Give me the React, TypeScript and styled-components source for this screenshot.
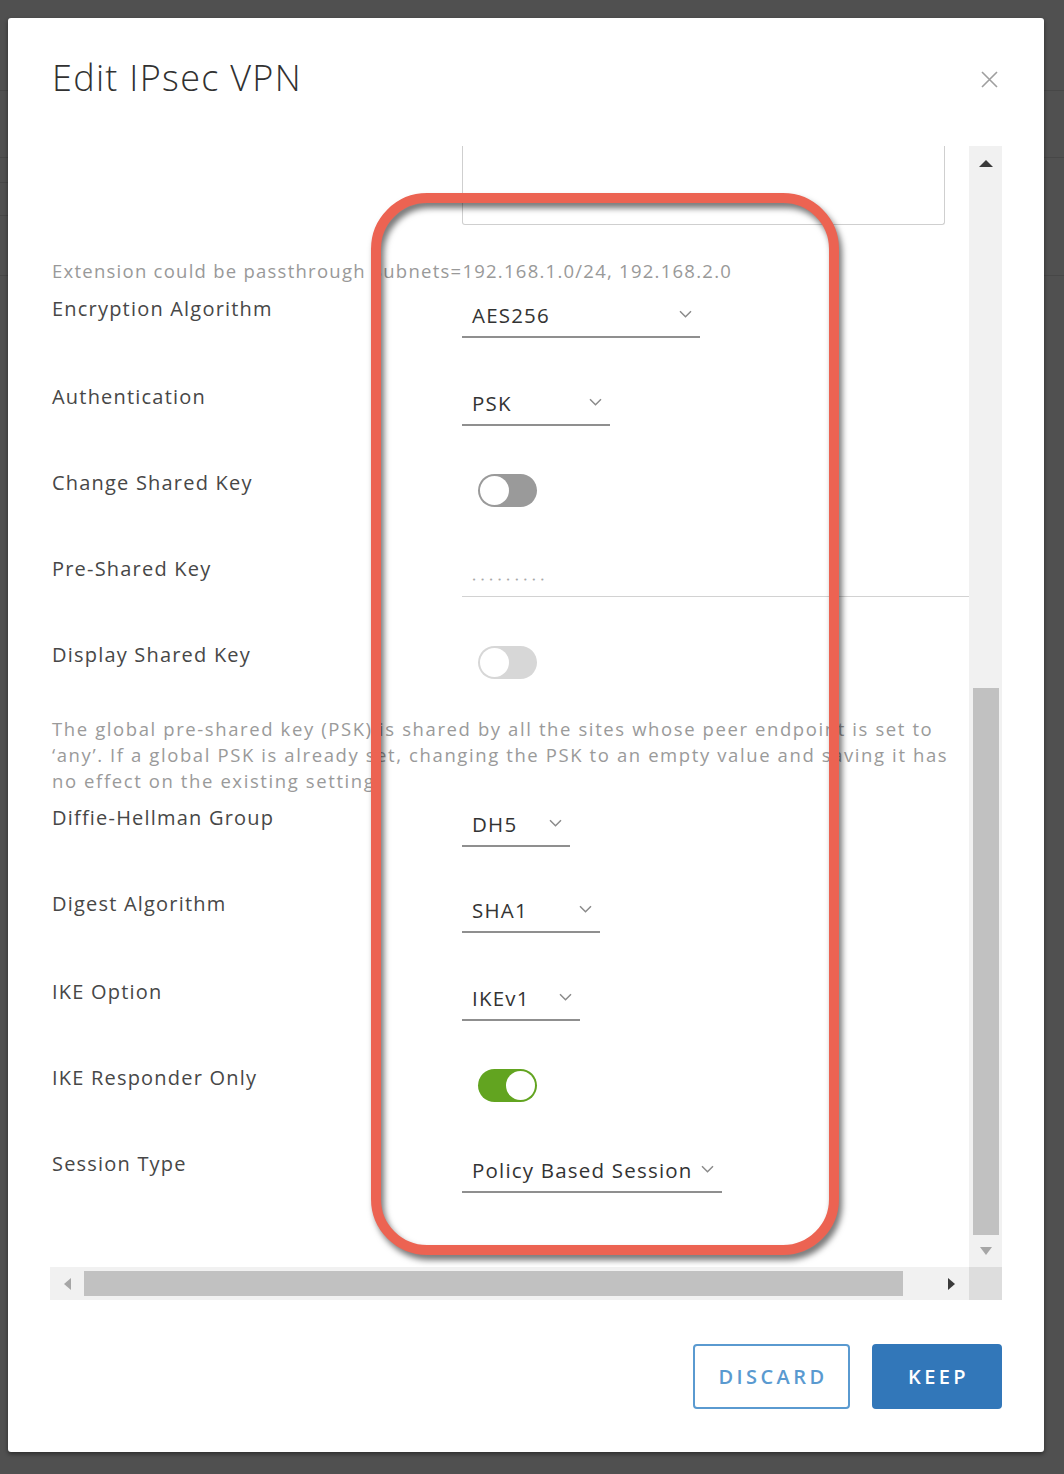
import React from "react";
import styled, { createGlobalStyle, css } from "styled-components";

const GlobalStyle = createGlobalStyle`
  html, body {
    margin: 0;
    padding: 0;
    background: #505050;
  }
  body {
    font-family: "Open Sans", "Liberation Sans", sans-serif;
    -webkit-font-smoothing: antialiased;
  }
`;

const Page = styled.div`
  position: relative;
  width: 1064px;
  height: 1474px;
  box-sizing: border-box;
  padding: 18px 20px 0 8px;
  overflow: hidden;
  background:
    linear-gradient(#474747, #474747) 0 90px / 100% 1px no-repeat,
    linear-gradient(#474747, #474747) 0 157px / 100% 1px no-repeat,
    linear-gradient(#474747, #474747) 0 275px / 100% 1px no-repeat,
    linear-gradient(#474747, #474747) 0 182px / 10px 1px no-repeat,
    linear-gradient(#474747, #474747) 0 215px / 10px 1px no-repeat,
    #505050;
`;

const Modal = styled.div`
  width: 1036px;
  height: 1434px;
  box-sizing: border-box;
  background: #ffffff;
  border-radius: 3px;
  box-shadow: 0 2px 4px rgba(0, 0, 0, 0.45);
  display: flex;
  flex-direction: column;
  padding: 38px 42px 0 42px;
`;

const Header = styled.div`
  display: flex;
  align-items: center;
  justify-content: space-between;
  height: 44px;
  padding-left: 2px;
`;

const Title = styled.h2`
  margin: 0;
  font-family: "Open Sans", "Liberation Sans", sans-serif;
  font-weight: 300;
  font-size: 36px;
  line-height: 44px;
  color: #313131;
  letter-spacing: 1.3px;
`;

const CloseButton = styled.button`
  border: 0;
  background: transparent;
  padding: 0;
  width: 17px;
  height: 17px;
  margin-right: 4px;
  margin-top: 2px;
  display: flex;
  align-items: center;
  justify-content: center;
  cursor: pointer;
`;

const ScrollFrame = styled.div`
  margin-top: 46px;
  width: 952px;
  height: 1154px;
  display: grid;
  grid-template-columns: 919px 33px;
  grid-template-rows: 1121px 33px;
`;

const Viewport = styled.div`
  overflow: hidden;
  position: relative;
  background: #ffffff;
`;

const Content = styled.div`
  display: flex;
  flex-direction: column;
  width: 1000px;
`;

const TextareaStub = styled.div`
  margin-left: 412px;
  width: 483px;
  height: 79px;
  box-sizing: border-box;
  border: 1px solid #cfcfcf;
  border-top: 0;
  border-radius: 0 0 3px 3px;
`;

const HelperLine = styled.div`
  margin-top: 34px;
  padding-left: 2px;
  font-size: 18.5px;
  line-height: 24px;
  color: #999999;
  white-space: nowrap;
  letter-spacing: 1.25px;
`;

const Row = styled.div<{ $h: number; $mt?: number }>`
  display: grid;
  grid-template-columns: 412px 1fr;
  height: ${(p) => p.$h}px;
  margin-top: ${(p) => p.$mt ?? 0}px;
  align-items: start;
`;

const Label = styled.div`
  padding-left: 2px;
  font-size: 20px;
  line-height: 24px;
  color: #474747;
  letter-spacing: 1.2px;
  white-space: nowrap;
`;

const Select = styled.div<{ $w: number }>`
  width: ${(p) => p.$w}px;
  box-sizing: border-box;
  display: flex;
  align-items: center;
  justify-content: space-between;
  padding: 6px 8px 9px 10px;
  border-bottom: 2px solid #8f8f8f;
  cursor: pointer;
`;

const SelectValue = styled.span`
  font-size: 20.5px;
  line-height: 24px;
  color: #333333;
  letter-spacing: 1.2px;
  white-space: nowrap;
`;

const Chevron = styled.svg`
  width: 13px;
  height: 8px;
  flex: none;
  margin-top: -3px;
`;

const PasswordField = styled.div`
  height: 40px;
  box-sizing: border-box;
  border-bottom: 1px solid #d2d2d2;
  padding: 8px 0 0 10px;
`;

const Dots = styled.span`
  font-family: "DejaVu Sans", sans-serif;
  font-size: 7px;
  line-height: 22px;
  color: #a8a8a8;
  letter-spacing: 4.4px;
`;

type ToggleState = "off" | "disabled" | "on";

const trackColor = (s: ToggleState) =>
  s === "on" ? "#62a420" : s === "off" ? "#9a9a9a" : "#d7d7d7";

const Toggle = styled.span<{ $state: ToggleState }>`
  position: relative;
  display: block;
  width: 59px;
  height: 33px;
  margin: 3px 0 0 16px;
  border-radius: 17px;
  background: ${(p) => trackColor(p.$state)};
  &::after {
    content: "";
    position: absolute;
    top: 2px;
    width: 29px;
    height: 29px;
    border-radius: 50%;
    background: #ffffff;
    ${(p) =>
      p.$state === "on"
        ? css`
            right: 2px;
          `
        : css`
            left: 2px;
          `}
  }
`;

const HelpText = styled.p`
  margin: 0;
  padding-left: 2px;
  font-size: 18.5px;
  line-height: 26px;
  color: #9a9a9a;
  letter-spacing: 1.6px;
  white-space: nowrap;
`;

const HelpLine = styled.span`
  display: block;
`;

const VTrack = styled.div`
  background: #f1f1f1;
  display: flex;
  flex-direction: column;
  align-items: center;
`;

const ArrowCell = styled.div<{ $h?: number; $w?: number; $justify?: string; $padRight?: number }>`
  flex: none;
  display: flex;
  align-items: center;
  justify-content: ${(p) => p.$justify ?? "center"};
  height: ${(p) => (p.$h ? `${p.$h}px` : "100%")};
  width: ${(p) => (p.$w ? `${p.$w}px` : "100%")};
  padding-right: ${(p) => p.$padRight ?? 0}px;
  box-sizing: border-box;
`;

type Dir = "up" | "down" | "left" | "right";

const Arrow = styled.span<{ $dir: Dir; $dark?: boolean }>`
  width: 0;
  height: 0;
  ${(p) => {
    const c = p.$dark ? "#3a3a3a" : "#a6a6a6";
    switch (p.$dir) {
      case "up":
        return css`
          border-left: 7.5px solid transparent;
          border-right: 7.5px solid transparent;
          border-bottom: 7px solid ${c};
        `;
      case "down":
        return css`
          border-left: 6.5px solid transparent;
          border-right: 6.5px solid transparent;
          border-top: 8px solid ${c};
        `;
      case "left":
        return css`
          border-top: 6px solid transparent;
          border-bottom: 6px solid transparent;
          border-right: 7px solid ${c};
        `;
      case "right":
        return css`
          border-top: 6px solid transparent;
          border-bottom: 6px solid transparent;
          border-left: 7px solid ${c};
        `;
    }
  }}
`;

const VSpacer = styled.div`
  flex: 1;
`;

const VThumb = styled.div`
  flex: none;
  width: 26px;
  height: 547px;
  background: #c1c1c1;
`;

const HTrack = styled.div`
  background: #f1f1f1;
  display: flex;
  align-items: center;
`;

const HThumb = styled.div`
  flex: none;
  width: 819px;
  height: 25px;
  background: #c1c1c1;
`;

const Corner = styled.div`
  background: #dddddd;
`;

const Footer = styled.div`
  margin-top: 44px;
  display: flex;
  justify-content: flex-end;
  gap: 22px;
`;

const Button = styled.button<{ $primary?: boolean }>`
  height: 65px;
  box-sizing: border-box;
  border-radius: 4px;
  font-family: "Open Sans", "Liberation Sans", sans-serif;
  font-weight: 600;
  font-size: 20px;
  letter-spacing: 3.4px;
  padding: 0 0 0 3px;
  cursor: pointer;
  ${(p) =>
    p.$primary
      ? css`
          width: 130px;
          background: #3277b9;
          border: 2px solid #3277b9;
          color: #ffffff;
        `
      : css`
          width: 157px;
          background: #ffffff;
          border: 2px solid #5a9ad0;
          color: #5a9ad0;
        `}
`;

const Annotation = styled.div`
  position: absolute;
  left: 371px;
  top: 193px;
  width: 468px;
  height: 1062px;
  box-sizing: border-box;
  border: 10px solid #ec6352;
  border-radius: 56px;
  filter: drop-shadow(3px 5px 3px rgba(0, 0, 0, 0.55));
  pointer-events: none;
`;

const ChevronIcon = () => (
  <Chevron viewBox="0 0 13 8">
    <path d="M1 1.2l5.5 5.5L12 1.2" fill="none" stroke="#8a8a8a" strokeWidth="1.5" />
  </Chevron>
);

const SelectField = ({ value, width }: { value: string; width: number }) => (
  <Select $w={width}>
    <SelectValue>{value}</SelectValue>
    <ChevronIcon />
  </Select>
);

export default function App() {
  return (
    <>
      <GlobalStyle />
      <Page>
        <Modal>
          <Header>
            <Title>Edit IPsec VPN</Title>
            <CloseButton aria-label="Close">
              <svg width="17" height="17" viewBox="0 0 17 17">
                <path d="M1 1l15 15M16 1L1 16" stroke="#9f9f9f" strokeWidth="1.6" />
              </svg>
            </CloseButton>
          </Header>

          <ScrollFrame>
            <Viewport>
              <Content>
                <TextareaStub />
                <HelperLine>
                  Extension could be passthrough Subnets=192.168.1.0/24, 192.168.2.0
                </HelperLine>

                <Row $h={88} $mt={14}>
                  <Label>Encryption Algorithm</Label>
                  <SelectField value="AES256" width={238} />
                </Row>
                <Row $h={86}>
                  <Label>Authentication</Label>
                  <SelectField value="PSK" width={148} />
                </Row>
                <Row $h={86}>
                  <Label>Change Shared Key</Label>
                  <Toggle $state="off" />
                </Row>
                <Row $h={86}>
                  <Label>Pre-Shared Key</Label>
                  <PasswordField>
                    <Dots>•••••••••</Dots>
                  </PasswordField>
                </Row>
                <Row $h={73}>
                  <Label>Display Shared Key</Label>
                  <Toggle $state="disabled" />
                </Row>

                <HelpText>
                  <HelpLine>
                    The global pre-shared key (PSK) is shared by all the sites whose peer endpoint is set to
                  </HelpLine>
                  <HelpLine>
                    ‘any’. If a global PSK is already set, changing the PSK to an empty value and saving it has
                  </HelpLine>
                  <HelpLine>no effect on the existing setting.</HelpLine>
                </HelpText>

                <Row $h={86} $mt={12}>
                  <Label>Diffie-Hellman Group</Label>
                  <SelectField value="DH5" width={108} />
                </Row>
                <Row $h={88}>
                  <Label>Digest Algorithm</Label>
                  <SelectField value="SHA1" width={138} />
                </Row>
                <Row $h={86}>
                  <Label>IKE Option</Label>
                  <SelectField value="IKEv1" width={118} />
                </Row>
                <Row $h={86}>
                  <Label>IKE Responder Only</Label>
                  <Toggle $state="on" />
                </Row>
                <Row $h={86}>
                  <Label>Session Type</Label>
                  <SelectField value="Policy Based Session" width={260} />
                </Row>
              </Content>
            </Viewport>

            <VTrack>
              <ArrowCell $h={34}>
                <Arrow $dir="up" $dark />
              </ArrowCell>
              <VSpacer />
              <VThumb />
              <ArrowCell $h={32}>
                <Arrow $dir="down" />
              </ArrowCell>
            </VTrack>

            <HTrack>
              <ArrowCell $w={34}>
                <Arrow $dir="left" />
              </ArrowCell>
              <HThumb />
              <ArrowCell $w={66} $justify="flex-end" $padRight={14}>
                <Arrow $dir="right" $dark />
              </ArrowCell>
            </HTrack>
            <Corner />
          </ScrollFrame>

          <Footer>
            <Button>DISCARD</Button>
            <Button $primary>KEEP</Button>
          </Footer>
        </Modal>
        <Annotation />
      </Page>
    </>
  );
}
